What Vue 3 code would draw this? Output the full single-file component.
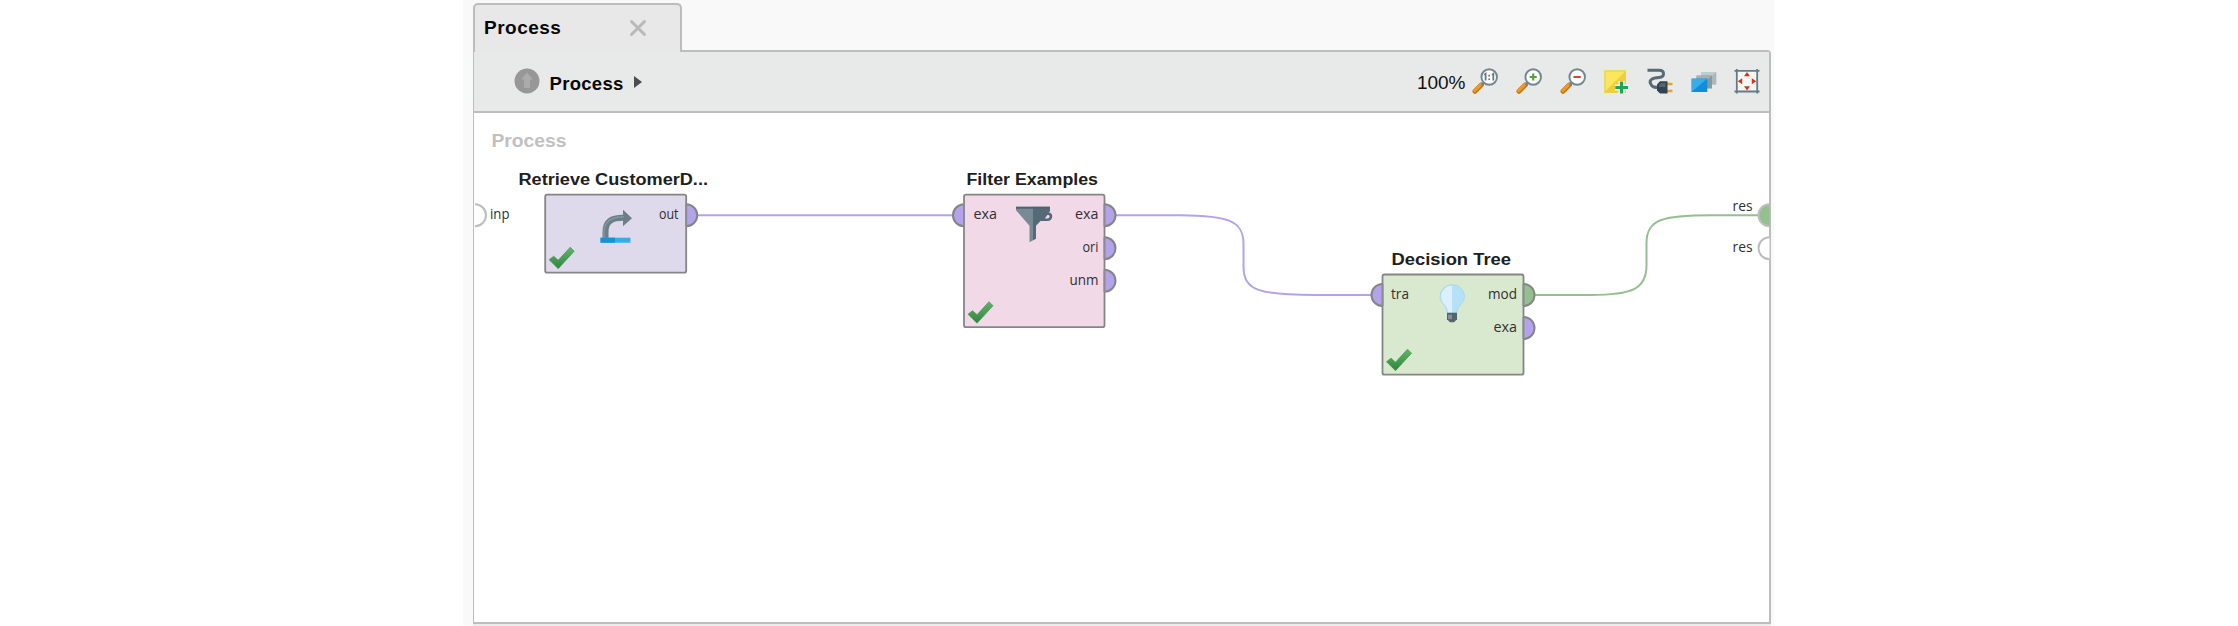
<script setup>
const nodes = [
  {
    id: 'retrieve', x: 545.2, y: 194.5, w: 141, h: 78, fill: '#dfdaeb',
    title: 'Retrieve CustomerD...', tx: 518.5, ty: 184.5, tw: 189.5,
    ports: [{ side: 'out', y: 215, label: 'out', x: 659, w: 19.5, fill: '#b3a3ea' }],
  },
  {
    id: 'filter', x: 964, y: 194.5, w: 140.5, h: 132.5, fill: '#f1d9e7',
    title: 'Filter Examples', tx: 966.5, ty: 184.5, tw: 131.5,
    ports: [
      { side: 'in', y: 215, label: 'exa', x: 973.5, w: 23.5, fill: '#b3a3ea' },
      { side: 'out', y: 215, label: 'exa', x: 1075, w: 23.5, fill: '#b3a3ea' },
      { side: 'out', y: 248, label: 'ori', x: 1082.5, w: 16, fill: '#b3a3ea' },
      { side: 'out', y: 280.5, label: 'unm', x: 1069.5, w: 29, fill: '#b3a3ea' },
    ],
  },
  {
    id: 'tree', x: 1382.5, y: 274.3, w: 141, h: 100.2, fill: '#d9e9cf',
    title: 'Decision Tree', tx: 1391.5, ty: 264.5, tw: 119.5,
    ports: [
      { side: 'in', y: 294.7, label: 'tra', x: 1391, w: 18, fill: '#b3a3ea' },
      { side: 'out', y: 294.7, label: 'mod', x: 1488, w: 29, fill: '#93c08e' },
      { side: 'out', y: 327.7, label: 'exa', x: 1493.5, w: 23.5, fill: '#b3a3ea' },
    ],
  },
]
const arc = (x, y, side) => `M${x} ${y - 11}A11 11 0 0 ${side === 'out' ? 1 : 0} ${x} ${y + 11}`
const edge = (n, p) => (p.side === 'out' ? n.x + n.w : n.x)
</script>

<template>
  <div class="page">
    <main class="workspace">
      <div class="tab">
        <span class="tab-name">Process</span>
        <svg class="close" width="18" height="18" viewBox="0 0 18 18">
          <path d="M2.5 2.5L15.5 15.5M15.5 2.5L2.5 15.5" stroke="#b9b9b9" stroke-width="3" stroke-linecap="round" />
        </svg>
      </div>
      <section class="panel">
        <header class="toolbar">
          <svg class="up" width="26" height="26" viewBox="0 0 26 26">
            <circle cx="13" cy="13" r="12.5" fill="#979797" />
            <path d="M13 4.5L19 11.5H16V20H10V11.5H7Z" fill="#ababab" />
          </svg>
          <span class="crumb">Process</span>
          <svg class="caret" width="9" height="14" viewBox="0 0 9 14"><path d="M0 1L8 7L0 13Z" fill="#4c4c50" /></svg>
          <div class="tools">
            <span class="percent">100%</span>
            <svg v-for="kind in ['fit', 'plus', 'minus']" :key="kind" width="26" height="26" viewBox="0 0 26 26">
              <path d="M3 23.3L9.5 16.8" stroke="#c97812" stroke-width="5" stroke-linecap="round" />
              <path d="M2.7 22.5L9 16.2" stroke="#f0982a" stroke-width="3" stroke-linecap="round" />
              <path d="M9.5 17L12 14.5" stroke="#718690" stroke-width="2.4" />
              <circle cx="17.2" cy="9" r="7.8" fill="#fbfcfc" stroke="#718791" stroke-width="1.9" />
              <path v-if="kind === 'fit'" d="M12.3 6.8L13.6 5.8V12.5M17.2 6.8V8.4M17.2 10.5V12M20 6.8L21.3 5.8V12.5" fill="none" stroke="#6a747a" stroke-width="1.7" />
              <path v-else-if="kind === 'plus'" d="M17.2 5.5V12.5M13.7 9H20.7" stroke="#5b9f32" stroke-width="2.1" />
              <path v-else d="M13.5 9H20.8" stroke="#cf4937" stroke-width="2" />
            </svg>
            <svg width="26" height="26" viewBox="0 0 26 26">
              <path d="M1.5 2.5H23V25H1.5Z" fill="#f0cf3d" />
              <path d="M1.5 2.5H23L1.5 24Z" fill="#f8e75f" />
              <path d="M2 3H22.5V24.5H2Z" fill="none" stroke="#ead04b" />
              <path d="M18.5 13V26M12 19.5H25" stroke="#f4f5f4" stroke-width="6" />
              <path d="M18.5 13.5V25.5M12.3 19.5H25" stroke="#19a55a" stroke-width="3.2" />
            </svg>
            <svg width="26" height="26" viewBox="0 0 26 26">
              <path d="M.5 2.3H12C18 2.3 18 9 12 9.5C5 10 2 12 3.5 15.5C5 19.5 8 19.5 12 19.5" fill="none" stroke="#566b77" stroke-width="3" />
              <path d="M19 16H25.5M19 23H25.5" stroke="#e5a22d" stroke-width="2.5" />
              <path d="M10 16.5L13 13.3H20.5V25.5H13L10 22.5Z" fill="#34434e" />
              <path d="M12 17L14 15H18.5V19H12Z" fill="#526570" />
            </svg>
            <svg width="26" height="26" viewBox="0 0 26 26">
              <path d="M10 4H25.5V16.5H10Z" fill="#c1cbce" /><path d="M11 15.5L25 4.5V16.5H11Z" fill="#aab7bb" />
              <path d="M5.5 7.5H21V20.5H5.5Z" fill="#87989f" /><path d="M6 8H20.5L7 19Z" fill="#a5b2b7" />
              <path d="M.5 10.5H16.3V24H.5Z" fill="#118edb" /><path d="M1 11H15.8L1 23.5Z" fill="#37ade9" />
            </svg>
            <svg width="26" height="26" viewBox="0 0 26 26">
              <path d="M2.5 2.5H23.5V23.5H2.5Z" fill="#f4f5f5" />
              <path d="M.5 2.8H25.5M.5 23.5H25.5M2.8 1V25.5M23.2 1V25.5" stroke="#657b85" stroke-width="1.8" />
              <path d="M13 4L16 8.3H10ZM13 22.5L16 18.2H10ZM3.8 13.2L8.2 10.2V16.2ZM22.2 13.2L17.8 10.2V16.2Z" fill="#c83a1c" />
            </svg>
          </div>
        </header>
        <svg class="canvas" width="1296" height="509" viewBox="474 112.8 1296 509">
          <defs>
            <linearGradient id="steel" x2="1"><stop offset=".5" stop-color="#788b95" /><stop offset=".5" stop-color="#546a76" /></linearGradient>
            <linearGradient id="check" x2="0" y2="1"><stop stop-color="#60b566" /><stop offset="1" stop-color="#2f8540" /></linearGradient>
          </defs>
          <text class="heading" x="491.5" y="146.5" textLength="75" lengthAdjust="spacingAndGlyphs">Process</text>

          <g fill="none" stroke="#b3a3ea" stroke-width="2">
            <path d="M697 215H953" />
            <path d="M1115 215H1180C1228 215.5 1243.5 220 1243.5 244V266C1243.5 291 1260 294.7 1315 294.7H1371" />
          </g>
          <path d="M1534 294.7H1590C1632 294.7 1646.5 289 1646.5 265V243C1646.5 219 1662 215 1712 215H1759" fill="none" stroke="#93c08e" stroke-width="2" />

          <g stroke="#bdbdbd" stroke-width="2">
            <path :d="arc(475, 215, 'out')" fill="#fff" />
            <path :d="arc(1769.5, 215, 'in')" fill="#93c08e" />
            <path :d="arc(1769.5, 248, 'in')" fill="#fff" />
          </g>
          <text class="port" x="490" y="219" textLength="19.5" lengthAdjust="spacingAndGlyphs">inp</text>
          <text class="port" x="1732.5" y="211" textLength="20" lengthAdjust="spacingAndGlyphs">res</text>
          <text class="port" x="1732.5" y="252" textLength="20" lengthAdjust="spacingAndGlyphs">res</text>

          <g v-for="n in nodes" :key="n.id">
            <text class="title" :x="n.tx" :y="n.ty" :textLength="n.tw" lengthAdjust="spacingAndGlyphs">{{ n.title }}</text>
            <rect :x="n.x" :y="n.y" :width="n.w" :height="n.h" rx="2" :fill="n.fill" stroke="#858585" stroke-width="1.8" />
            <g v-for="(p, i) in n.ports" :key="i">
              <path :d="arc(edge(n, p), p.y, p.side)" :fill="p.fill" stroke="#858585" stroke-width="2" />
              <path :d="`M${edge(n, p)} ${p.y - 11}V${p.y + 11}`" stroke="#8d8b91" stroke-width="2" />
              <text class="port" :x="p.x" :y="p.y + 4" :textLength="p.w" lengthAdjust="spacingAndGlyphs">{{ p.label }}</text>
            </g>
            <path
              :transform="`translate(${n.x + 4} ${n.y + n.h - 26})`"
              d="M0 13L4.5 9.5L9 13.5L21 .5L25 4.5L9 22Z"
              fill="url(#check)" stroke="#43974c" stroke-width=".7"
            />
          </g>

          <path d="M602.5 238V232C602.5 219 610 214.5 623 214.5V209.5L632 218L623 226V220.5C613 220.5 608.5 223 608.5 232V238Z" fill="#6b7f89" />
          <path d="M604 238V232C604 221 611 216.5 624 216.5" fill="none" stroke="#8497a0" stroke-width="1.5" />
          <path d="M600.5 237.5H630.5V242.5H600.5Z" fill="#32aee8" />
          <path d="M600.5 237.5H615V242.5H600.5Z" fill="#1692d5" />

          <path d="M1016 206.5H1050V211L1036 225.5V238.5L1029.500 242V225.5L1016 210Z" fill="url(#steel)" />
          <path d="M1016 206.5H1050V208.5H1016Z" fill="#4e6470" />
          <path d="M1042.500 219.500L1046.500 213.500H1049C1052 214.500 1051.500 219.500 1047.500 219.500Z" fill="#f1d9e7" stroke="#546a76" stroke-width="2.6" />

          <g transform="translate(0 80)">
            <path d="M1452 204.5A12 12 0 0 0 1440 216.5C1440 223 1447 225 1447 232.5H1457C1457 225 1464.5 223 1464.5 216.5A12 12 0 0 0 1452 204.5Z" fill="#b5e1f7" stroke="#a5d4ed" stroke-width=".8" />
            <path d="M1452 205.5A11 11 0 0 0 1441 216.5C1441 223 1448 225 1448 232.5H1452Z" fill="#daf0fc" />
            <path d="M1447 232.5H1457V239L1454 242H1450L1447 239Z" fill="#53646e" />
            <path d="M1448 234.5H1452V239H1448Z" fill="#81919a" />
          </g>
        </svg>
      </section>
    </main>
  </div>
</template>

<style>
body { background: #fff; }
</style>
<style scoped>
.page { height: 626px; overflow: hidden; background: #fff; font-family: "Liberation Sans", sans-serif; }
.workspace { box-sizing: border-box; width: 1311px; height: 626px; margin-left: 463px; padding: 3px 3px 0 10px; background: #f9f9f9; }
.tab { position: relative; z-index: 1; box-sizing: border-box; display: flex; align-items: center; justify-content: space-between; width: 209px; height: 49px; padding: 0 33px 2px 9px; border: 2px solid #bdbdbd; border-bottom: 0; border-radius: 5px 5px 0 0; background: #e8e8e8; }
.tab-name { font-size: 19px; font-weight: 700; letter-spacing: .5px; color: #080808; }
.panel { box-sizing: border-box; width: 1298px; height: 574px; margin-top: -2px; border: 2px solid #bdbdbd; border-left-width: 1px; border-right-width: 2px; border-radius: 0 4px 0 0; background: #fff; box-shadow: 0 4px #ececec; }
.toolbar { box-sizing: border-box; display: flex; align-items: center; height: 61px; padding: 1px 8.7px 0 40px; border-bottom: 2px solid #bdbdbd; background: #e8eae9; }
.up { margin-top: -3px; }
.crumb { margin: 3px 0 0 9.5px; font-size: 18.5px; font-weight: 700; letter-spacing: .3px; color: #080808; }
.caret { margin: 0 0 0 10px; }
.tools { display: flex; align-items: center; gap: 17.7px; margin-left: auto; margin-top: -2px; }
.percent { margin: 3px -11px 0 0; font-size: 19px; color: #111; }
.tools svg, .canvas { display: block; }
.heading { font: 700 18.5px "Liberation Sans", sans-serif; fill: #c1c1c1; }
.title { font: 700 17.4px "Liberation Sans", sans-serif; fill: #202020; }
.port { font: 14px "Open Sans", sans-serif; fill: #303030; }
</style>
